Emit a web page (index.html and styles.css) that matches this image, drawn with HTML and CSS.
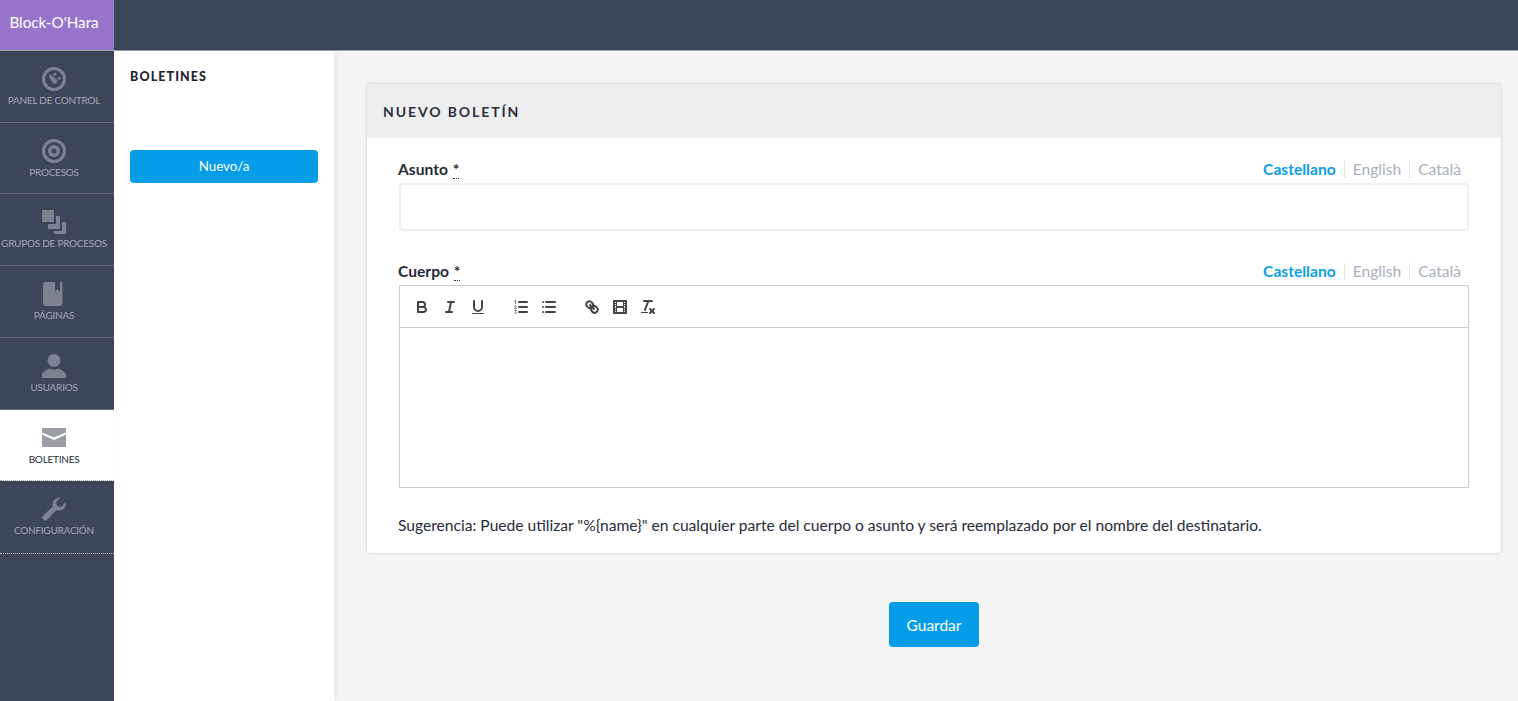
FILE: index.html
```html
<!DOCTYPE html>
<html lang="es">
<head>
  <meta charset="UTF-8">
  <title>Nuevo boletín</title>
  <link rel="stylesheet" href="styles.css">
</head>
<body>

  <header class="topbar">
    <div class="brand">Block-O'Hara</div>
  </header>

  <div class="layout">
    <nav class="sidebar">
      <a class="nav-item">
        <svg class="nav-icon" viewBox="0 0 24 24"><path fill-rule="evenodd" d="M12 0a12 12 0 1 0 0 24a12 12 0 0 0 0-24zM12 3a9 9 0 1 1 0 18a9 9 0 0 1 0-18z"/><path d="M6.600 9.200l1.800-1.800l4.800 4.200a2.600 2.600 0 1 1-3 3.200z"/><circle cx="13" cy="7.200" r="1.500"/><circle cx="17.300" cy="11.200" r="1.500"/></svg>
        <span>Panel de control</span>
      </a>
      <a class="nav-item">
        <svg class="nav-icon" viewBox="0 0 24 24"><path fill-rule="evenodd" d="M12 0a12 12 0 1 0 0 24a12 12 0 0 0 0-24zM12 3a9 9 0 1 1 0 18a9 9 0 0 1 0-18z"/><path fill-rule="evenodd" d="M12 6a6 6 0 1 0 0 12a6 6 0 0 0 0-12zM12 9.500a2.500 2.500 0 1 1 0 5a2.500 2.500 0 0 1 0-5z"/></svg>
        <span>Procesos</span>
      </a>
      <a class="nav-item">
        <svg class="nav-icon" viewBox="0 0 24 24"><path d="M0 0h12v12H0z"/><path d="M6 14h8V6h4v13H6z"/><path d="M12 21h8V12h4v12H12z"/></svg>
        <span>Grupos de procesos</span>
      </a>
      <a class="nav-item">
        <svg class="nav-icon" viewBox="0 0 24 24"><path d="M4 0h9v10l2.500-3l2.500 3V0h2.500v21a3 3 0 0 1-3 3H4a3 3 0 0 1-3-3V3a3 3 0 0 1 3-3z"/></svg>
        <span>Páginas</span>
      </a>
      <a class="nav-item">
        <svg class="nav-icon" viewBox="0 0 24 24"><ellipse cx="12" cy="6.500" rx="6.500" ry="6.500"/><path d="M0 24v-3c0-3 4-5 7.500-6.500c3 1.500 6 1.500 9 0c3.500 1.500 7.500 3.500 7.500 6.500v3z"/></svg>
        <span>Usuarios</span>
      </a>
      <a class="nav-item active">
        <svg class="nav-icon" viewBox="0 0 24 24"><path d="M0 2h24v4.500L12 11.500L0 6.500z"/><path d="M0 8.500l12 5.500l12-5.500V21H0z"/></svg>
        <span>Boletines</span>
      </a>
      <a class="nav-item last">
        <svg class="nav-icon" viewBox="0 0 24 24"><path d="M24 6.500a7 7 0 0 1-9.300 6.600L4.800 23a2.800 2.800 0 0 1-3.900-3.900l9.900-9.900A7 7 0 0 1 18.500 0.500L14 5l1 4l4 1l4.500-4.500q.5.500.5 1z"/></svg>
        <span>Configuración</span>
      </a>
    </nav>

    <aside class="subnav">
      <h3 class="subnav-title">Boletines</h3>
      <a class="btn-new">Nuevo/a</a>
    </aside>

    <main class="content">
      <section class="card">
        <h2 class="card-title">Nuevo boletín</h2>
        <div class="card-body">
          <div class="field">
            <div class="field-head">
              <label class="field-label">Asunto <abbr>*</abbr></label>
              <ul class="langs">
                <li class="current">Castellano</li>
                <li>English</li>
                <li>Català</li>
              </ul>
            </div>
            <input class="text-input" type="text">
          </div>

          <div class="field">
            <div class="field-head">
              <label class="field-label">Cuerpo <abbr>*</abbr></label>
              <ul class="langs">
                <li class="current">Castellano</li>
                <li>English</li>
                <li>Català</li>
              </ul>
            </div>
            <div class="editor">
              <div class="toolbar">
                <span class="tool-group">
                  <button class="tool" type="button"><svg viewBox="0 0 18 18"><path d="M5,4H9.500A2.500,2.500,0,0,1,12,6.500v0A2.500,2.500,0,0,1,9.500,9H5V4Z"/><path d="M5,9h5.500A2.500,2.500,0,0,1,13,11.500v0A2.500,2.500,0,0,1,10.500,14H5V9Z"/></svg></button>
                  <button class="tool" type="button"><svg viewBox="0 0 18 18"><line x1="7" x2="13" y1="4" y2="4"/><line x1="5" x2="11" y1="14" y2="14"/><line x1="8" x2="10" y1="14" y2="4"/></svg></button>
                  <button class="tool" type="button"><svg viewBox="0 0 18 18"><path d="M5,3V9a4,4,0,0,0,4,4H9a4,4,0,0,0,4-4V3"/><rect class="solid" height="1" rx=".5" width="12" x="3" y="15"/></svg></button>
                </span>
                <span class="tool-group">
                  <button class="tool" type="button"><svg viewBox="0 0 18 18"><line x1="7" x2="15" y1="4" y2="4"/><line x1="7" x2="15" y1="9" y2="9"/><line x1="7" x2="15" y1="14" y2="14"/><path class="thin" d="M3 2.500L3.700 2V6M2.600 8.300Q3.500 7.300 4.300 8.200Q4.500 9 2.600 10.600H4.500M2.700 12.400H4.300L3.300 13.800Q4.600 13.800 4.400 15Q3.700 16 2.600 15.200"/></svg></button>
                  <button class="tool" type="button"><svg viewBox="0 0 18 18"><line x1="6" x2="15" y1="4" y2="4"/><line x1="6" x2="15" y1="9" y2="9"/><line x1="6" x2="15" y1="14" y2="14"/><line x1="3" x2="3" y1="4" y2="4"/><line x1="3" x2="3" y1="9" y2="9"/><line x1="3" x2="3" y1="14" y2="14"/></svg></button>
                </span>
                <span class="tool-group">
                  <button class="tool" type="button"><svg viewBox="0 0 18 18"><line x1="7" x2="11" y1="7" y2="11"/><path d="M8.900,4.577a3.476,3.476,0,0,1,.36,4.679A3.476,3.476,0,0,1,4.577,8.900C3.185,7.500,2.035,6.400,4.217,4.217S7.500,3.185,8.900,4.577Z"/><path d="M13.423,9.100a3.476,3.476,0,0,0-4.679-.36,3.476,3.476,0,0,0,.36,4.679c1.392,1.392,2.500,2.542,4.679.36S14.815,10.500,13.423,9.100Z"/></svg></button>
                  <button class="tool" type="button"><svg viewBox="0 0 18 18"><rect height="12" width="12" x="3" y="3"/><rect class="solid" height="12" width="1" x="5" y="3"/><rect class="solid" height="12" width="1" x="12" y="3"/><rect class="solid" height="2" width="8" x="5" y="8"/><rect class="solid" height="1" width="3" x="3" y="5"/><rect class="solid" height="1" width="3" x="3" y="7"/><rect class="solid" height="1" width="3" x="3" y="10"/><rect class="solid" height="1" width="3" x="3" y="12"/><rect class="solid" height="1" width="3" x="12" y="5"/><rect class="solid" height="1" width="3" x="12" y="7"/><rect class="solid" height="1" width="3" x="12" y="10"/><rect class="solid" height="1" width="3" x="12" y="12"/></svg></button>
                  <button class="tool" type="button"><svg viewBox="0 0 18 18"><line x1="5" x2="13" y1="3" y2="3"/><line x1="6" x2="9.350" y1="12" y2="3"/><line x1="11" x2="15" y1="11" y2="15"/><line x1="15" x2="11" y1="11" y2="15"/><rect class="solid" height="1" rx=".5" width="7" x="2" y="14"/></svg></button>
                </span>
              </div>
              <div class="editor-area"></div>
            </div>
          </div>

          <p class="hint">Sugerencia: Puede utilizar "%{name}" en cualquier parte del cuerpo o asunto y será reemplazado por el nombre del destinatario.</p>
        </div>
      </section>

      <div class="actions">
        <button class="btn-save" type="button">Guardar</button>
      </div>
    </main>
  </div>

</body>
</html>
```

FILE: styles.css
```css
* {
  box-sizing: border-box;
}

html, body {
  height: 100%;
}

body {
  margin: 0;
  overflow: hidden;
  font-family: "Lato", "Noto Sans", sans-serif;
  font-size: 15.6px;
  color: #262b38;
  background-color: #f5f5f5;
}

.topbar {
  height: 51px;
  background-color: #3d4659;
  border-bottom: 1px solid #9da2ac;
}

.brand {
  width: 114px;
  height: 50px;
  padding-right: 6px;
  line-height: 45px;
  text-align: center;
  font-size: 15.2px;
  color: #fff;
  background-color: #9775cc;
}

.layout {
  display: flex;
  height: 650px;
}

/* left icon bar */
.sidebar {
  width: 114px;
  flex-shrink: 0;
  background-color: #3d4659;
}

.nav-item {
  display: flex;
  flex-direction: column;
  align-items: center;
  height: 71.72px;
  padding: 16px 6px 0 0;
  font-size: 10px;
  letter-spacing: -0.25px;
  text-transform: uppercase;
  white-space: nowrap;
  color: #a3a7b0;
  border-bottom: 1px solid #636a7a;
}

.nav-item span {
  margin-top: 2px;
  line-height: 14px;
}

.nav-icon {
  display: block;
  width: 24px;
  height: 24px;
  fill: #7d828e;
}

.nav-item.active {
  color: #262b38;
  background-color: #fff;
  border-bottom: 1px dotted #a8adb7;
}

.nav-item.active .nav-icon {
  fill: #9a9da5;
}

.nav-item.last {
  height: 72.7px;
  border-bottom: 1px dotted #c4c7ce;
}

/* second column */
.subnav {
  width: 220px;
  flex-shrink: 0;
  padding: 18px 16px 0;
  background-color: #fff;
  box-shadow: 2px 0 6px rgba(0, 0, 0, 0.06);
}

.subnav-title {
  margin: 0 0 65px;
  font-size: 12.5px;
  line-height: 16px;
  font-weight: 900;
  letter-spacing: 1.1px;
  text-transform: uppercase;
  color: #1f2430;
}

.btn-new {
  display: block;
  height: 33px;
  line-height: 32px;
  text-align: center;
  font-size: 13.3px;
  color: #fff;
  background-color: #059de8;
  border-radius: 4px;
}

/* main form */
.content {
  flex: 1;
  padding: 33px 17px 0 33px;
}

.card {
  background-color: #fff;
  border-radius: 4px;
  box-shadow: 0 0 3px rgba(0, 0, 0, 0.22);
}

.card-title {
  margin: 0;
  height: 54px;
  padding-left: 16px;
  line-height: 56px;
  font-size: 14px;
  font-weight: 700;
  letter-spacing: 1.9px;
  text-transform: uppercase;
  color: #2b3040;
  background-color: #eee;
  border-radius: 4px 4px 0 0;
}

.card-body {
  padding: 20px 32px 17px 31px;
}

.field {
  margin-bottom: 29px;
}

.field-head {
  display: flex;
  justify-content: space-between;
  align-items: center;
  height: 25px;
  padding-bottom: 3px;
}

.field-label {
  font-weight: 700;
}

.field-label abbr {
  margin-left: 1px;
  border-bottom: 1px dotted #262b38;
}

.langs {
  display: flex;
  margin: 0;
  padding: 0;
  list-style: none;
  color: #a9b0bd;
}

.langs li {
  padding: 0 8px;
  line-height: 17px;
  border-left: 1px solid #e6e6e6;
}

.langs li:first-child {
  border-left: 0;
}

.langs .current {
  font-weight: 700;
  color: #0a9fe9;
}

.text-input {
  display: block;
  width: 1070px;
  height: 48px;
  margin-left: 1px;
  background-color: #fff;
  border: 2px solid #f0f0f0;
  border-radius: 4px;
}

.editor {
  width: 1070px;
  margin-left: 1px;
  border: 1px solid #ccc;
}

.toolbar {
  display: flex;
  height: 42px;
  padding: 9px 8px 7px;
  border-bottom: 1px solid #ccc;
}

.tool-group {
  display: flex;
  margin-right: 15px;
}

.tool {
  width: 28px;
  height: 24px;
  padding: 3px 5px;
  background: none;
  border: 0;
}

.tool svg {
  display: block;
  width: 18px;
  height: 18px;
  fill: none;
  stroke: #444;
  stroke-width: 2;
  stroke-linecap: round;
  stroke-linejoin: round;
}

.tool .solid {
  fill: #444;
  stroke: none;
}

.tool .thin {
  stroke-width: 0.7;
}

.editor-area {
  height: 159px;
}

.hint {
  margin: -3px 0 0;
  line-height: 22px;
}

.actions {
  display: flex;
  justify-content: center;
  padding-top: 49px;
}

.btn-save {
  width: 90px;
  height: 45px;
  font-family: inherit;
  font-size: 15.5px;
  color: #fff;
  background-color: #059de8;
  border: 0;
  border-radius: 4px;
}
```
